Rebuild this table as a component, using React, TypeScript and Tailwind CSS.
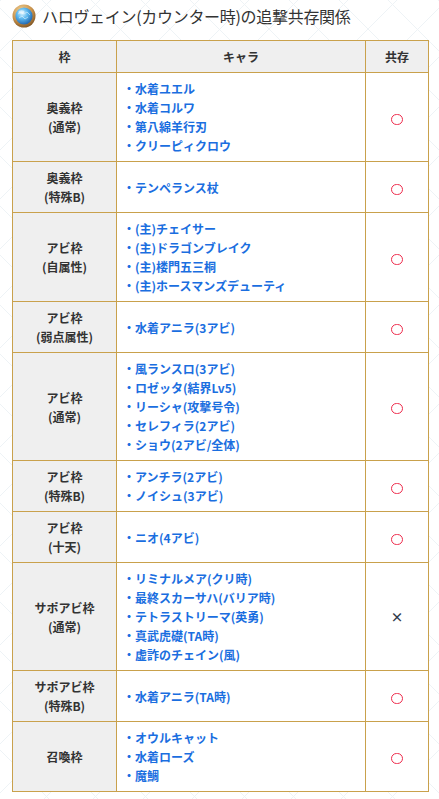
import React from "react";

type Row = { slot: string[]; chars: string[]; ok: boolean };

const rows: Row[] = [
  { slot: ["奥義枠", "(通常)"], chars: ["水着ユエル", "水着コルワ", "第八綿羊行刃", "クリーピィクロウ"], ok: true },
  { slot: ["奥義枠", "(特殊B)"], chars: ["テンペランス杖"], ok: true },
  { slot: ["アビ枠", "(自属性)"], chars: ["(主)チェイサー", "(主)ドラゴンブレイク", "(主)楼門五三桐", "(主)ホースマンズデューティ"], ok: true },
  { slot: ["アビ枠", "(弱点属性)"], chars: ["水着アニラ(3アビ)"], ok: true },
  { slot: ["アビ枠", "(通常)"], chars: ["風ランスロ(3アビ)", "ロゼッタ(結界Lv5)", "リーシャ(攻撃号令)", "セレフィラ(2アビ)", "ショウ(2アビ/全体)"], ok: true },
  { slot: ["アビ枠", "(特殊B)"], chars: ["アンチラ(2アビ)", "ノイシュ(3アビ)"], ok: true },
  { slot: ["アビ枠", "(十天)"], chars: ["ニオ(4アビ)"], ok: true },
  { slot: ["サポアビ枠", "(通常)"], chars: ["リミナルメア(クリ時)", "最終スカーサハ(バリア時)", "テトラストリーマ(英勇)", "真武虎礎(TA時)", "虚詐のチェイン(風)"], ok: false },
  { slot: ["サポアビ枠", "(特殊B)"], chars: ["水着アニラ(TA時)"], ok: true },
  { slot: ["召喚枠"], chars: ["オウルキャット", "水着ローズ", "魔鯛"], ok: true },
];

function Orb() {
  return (
    <svg width="24" height="24" viewBox="0 0 24 24" className="shrink-0">
      <defs>
        <radialGradient id="ring" cx="40%" cy="30%" r="75%">
          <stop offset="0%" stopColor="#f5d9a0" />
          <stop offset="60%" stopColor="#c8914a" />
          <stop offset="100%" stopColor="#7a5020" />
        </radialGradient>
        <radialGradient id="ball" cx="40%" cy="35%" r="70%">
          <stop offset="0%" stopColor="#d6f2ff" />
          <stop offset="45%" stopColor="#5cb8ef" />
          <stop offset="100%" stopColor="#1c5ea8" />
        </radialGradient>
      </defs>
      <circle cx="12" cy="12" r="11.5" fill="url(#ring)" />
      <circle cx="12" cy="12" r="8.6" fill="url(#ball)" />
      <path d="M6 10 L9 8 L12 10 L15 8 L18 11 M7 14 L10 12 L13 15 L16 13" stroke="#e8f8ff" strokeWidth="0.8" fill="none" opacity="0.7" />
      <ellipse cx="9.5" cy="8" rx="3" ry="1.8" fill="#ffffff" opacity="0.55" />
    </svg>
  );
}

export default function App() {
  return (
    <div
      className="w-[439px] min-h-[799px] bg-white bg-[repeating-linear-gradient(45deg,transparent_0_34px,#eef3f6_34px_35px),repeating-linear-gradient(-45deg,transparent_0_34px,#eef3f6_34px_35px)] text-[#333]"
      style={{ fontFamily: '"Noto Sans CJK JP", "Noto Sans", sans-serif' }}
    >
      <div className="flex items-center gap-[6px] pl-[12px] h-[31px] pt-[1px]">
        <Orb />
        <div className="text-[16px] leading-[20px] text-[#333] tracking-[-0.3px]">ハロヴェイン(カウンター時)の追撃共存関係</div>
      </div>
      <div className="pt-[9px] pl-[12px]">
        <table className="border-collapse w-[416px] bg-white text-[12px] leading-[19px] table-fixed">
          <colgroup>
            <col className="w-[104px]" />
            <col className="w-[249px]" />
            <col className="w-[63px]" />
          </colgroup>
          <thead>
            <tr>
              <th className="border border-[#c9a14c] bg-[#efefef] py-[6px] font-bold text-center">枠</th>
              <th className="border border-[#c9a14c] bg-[#efefef] py-[6px] font-bold text-center">キャラ</th>
              <th className="border border-[#c9a14c] bg-[#efefef] py-[6px] font-bold text-center">共存</th>
            </tr>
          </thead>
          <tbody>
            {rows.map((r, i) => (
              <tr key={i}>
                <th className="border border-[#c9a14c] bg-[#efefef] py-[6px] font-bold text-center align-middle">
                  {r.slot.map((s, j) => (
                    <div key={j}>{s}</div>
                  ))}
                </th>
                <td className="border border-[#c9a14c] py-[6px] pl-[6px] align-middle text-[#1a6ee0] font-bold">
                  {r.chars.map((c, j) => (
                    <div key={j} className="whitespace-nowrap">・{c}</div>
                  ))}
                </td>
                <td className="border border-[#c9a14c] text-center align-middle">
                  {r.ok ? (
                    <span className="inline-block w-[12px] h-[11px] rounded-full border-[1.5px] border-[#ee2a4b] align-middle" />
                  ) : (
                    <span className="text-[13px] font-bold text-[#2f3a4a]">×</span>
                  )}
                </td>
              </tr>
            ))}
          </tbody>
        </table>
      </div>
    </div>
  );
}
